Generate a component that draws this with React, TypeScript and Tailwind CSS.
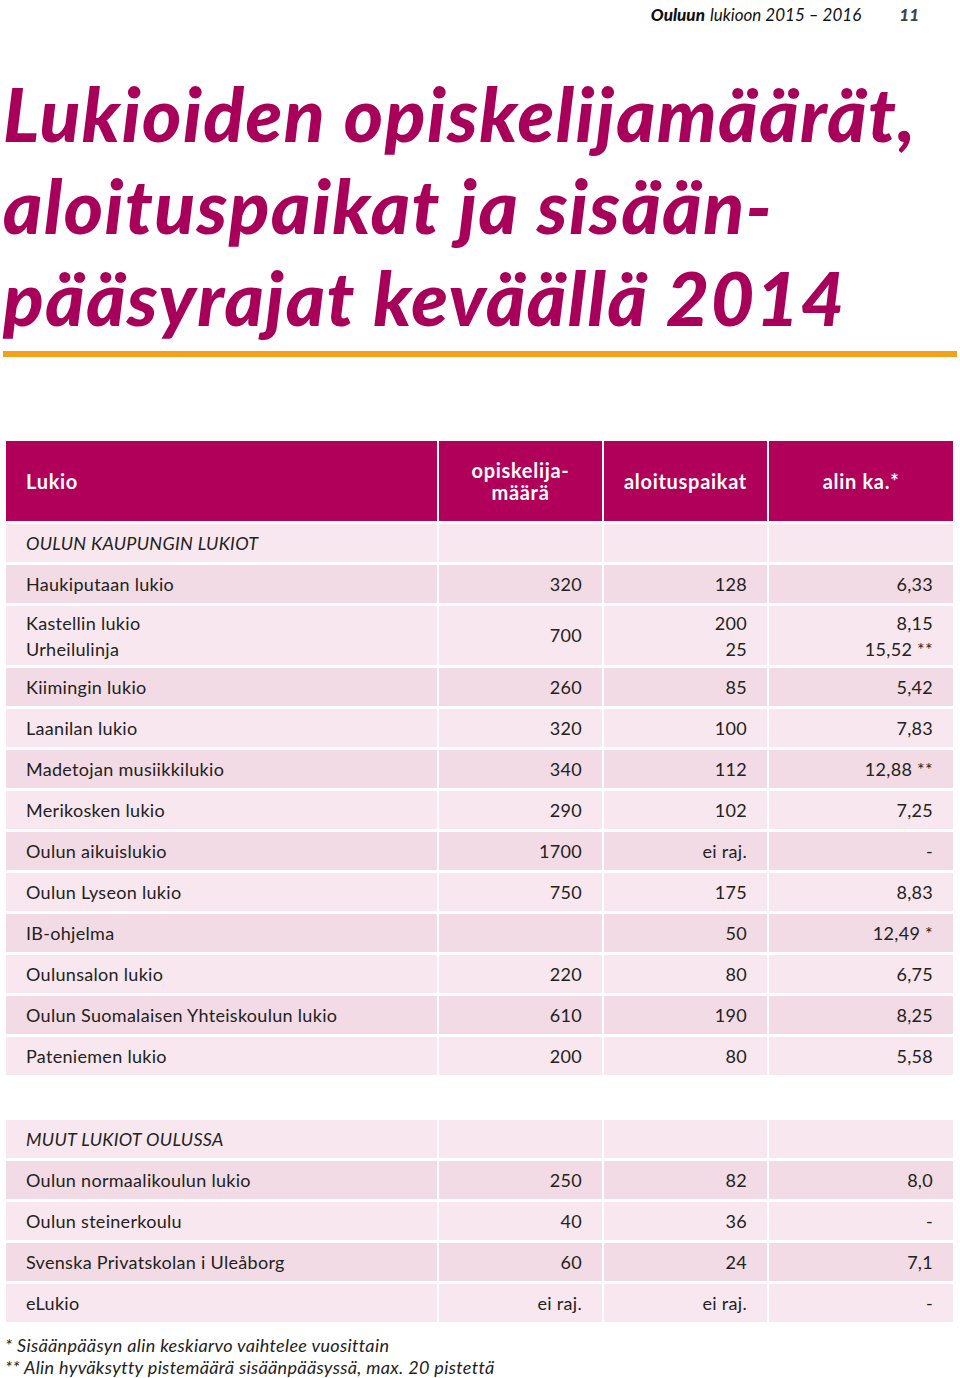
import React from "react";

type Row = { name: React.ReactNode; a: React.ReactNode; b: React.ReactNode; c: React.ReactNode; tall?: boolean; italic?: boolean };

const light = "bg-[#f8e7ee]";
const dark = "bg-[#f2dbe4]";

function Cell({ children, right, cls }: { children?: React.ReactNode; right?: boolean; cls: string }) {
  return (
    <div className={`${cls} flex items-center ${right ? "justify-end pr-[20px] text-right" : "pl-[20px]"}`}>
      <div>{children}</div>
    </div>
  );
}

function Body({ rows }: { rows: Row[] }) {
  return (
    <div className="grid grid-cols-[431px_163px_163px_184px] gap-x-[2px] gap-y-[3px]">
      {rows.map((r, i) => {
        const cls = (i % 2 === 0 ? light : dark) + (r.tall ? " h-[59px]" : " h-[38px]");
        return (
          <React.Fragment key={i}>
            <Cell cls={cls}>
              <span className={r.italic ? "italic" : ""}>{r.name}</span>
            </Cell>
            <Cell cls={cls} right>{r.a}</Cell>
            <Cell cls={cls} right>{r.b}</Cell>
            <Cell cls={cls} right>{r.c}</Cell>
          </React.Fragment>
        );
      })}
    </div>
  );
}

const two = (x: string, y: string) => (
  <div className="leading-[26px]">
    <div>{x}</div>
    <div>{y}</div>
  </div>
);

const rows1: Row[] = [
  { name: "OULUN KAUPUNGIN LUKIOT", a: "", b: "", c: "", italic: true },
  { name: "Haukiputaan lukio", a: "320", b: "128", c: "6,33" },
  { name: two("Kastellin lukio", "Urheilulinja"), a: "700", b: two("200", "25"), c: two("8,15", "15,52 **"), tall: true },
  { name: "Kiimingin lukio", a: "260", b: "85", c: "5,42" },
  { name: "Laanilan lukio", a: "320", b: "100", c: "7,83" },
  { name: "Madetojan musiikkilukio", a: "340", b: "112", c: "12,88 **" },
  { name: "Merikosken lukio", a: "290", b: "102", c: "7,25" },
  { name: "Oulun aikuislukio", a: "1700", b: "ei raj.", c: "-" },
  { name: "Oulun Lyseon lukio", a: "750", b: "175", c: "8,83" },
  { name: "IB-ohjelma", a: "", b: "50", c: "12,49 *" },
  { name: "Oulunsalon lukio", a: "220", b: "80", c: "6,75" },
  { name: "Oulun Suomalaisen Yhteiskoulun lukio", a: "610", b: "190", c: "8,25" },
  { name: "Pateniemen lukio", a: "200", b: "80", c: "5,58" },
];

const rows2: Row[] = [
  { name: "MUUT LUKIOT OULUSSA", a: "", b: "", c: "", italic: true },
  { name: "Oulun normaalikoulun lukio", a: "250", b: "82", c: "8,0" },
  { name: "Oulun steinerkoulu", a: "40", b: "36", c: "-" },
  { name: "Svenska Privatskolan i Uleåborg", a: "60", b: "24", c: "7,1" },
  { name: "eLukio", a: "ei raj.", b: "ei raj.", c: "-" },
];

export default function App() {
  return (
    <div className="w-[960px] h-[1378px] bg-white text-[#222] font-['Lato',sans-serif] overflow-hidden">
      <div className="flex justify-end items-center h-[28px] pt-[1px] pr-[41px] text-[17px] italic text-[#111]">
        <span className="font-black">Ouluun</span>
        <span className="ml-[5px]">lukioon 2015 – 2016</span>
        <span className="ml-[38px] font-black text-[#3a4450]">11</span>
      </div>
      <h1 className="mt-[39px] pl-[3px] text-[75px] leading-[92px] font-black italic text-[#a8005a] tracking-[1.5px]">
        <div>Lukioiden opiskelijamäärät,</div>
        <div>aloituspaikat ja sisään-</div>
        <div>pääsyrajat keväällä 2014</div>
      </h1>
      <div className="ml-[3px] mt-[8px] w-[954px] h-[6px] bg-[#f4a11a]" />
      <div className="pl-[6px] mt-[84px] text-[18px] tracking-[0.3px]">
        <div className="grid grid-cols-[431px_163px_163px_184px] gap-x-[2px] h-[80px] mb-[3px] text-white font-bold text-[20px] tracking-[0.7px]">
          <div className="bg-[#b0005a] flex items-center pl-[20px]">Lukio</div>
          <div className="bg-[#b0005a] flex items-center justify-center text-center leading-[22px]">
            <div>opiskelija-<br />määrä</div>
          </div>
          <div className="bg-[#b0005a] flex items-center justify-center">aloituspaikat</div>
          <div className="bg-[#b0005a] flex items-center justify-center">alin ka.*</div>
        </div>
        <Body rows={rows1} />
        <div className="h-[45px]" />
        <Body rows={rows2} />
        <div className="mt-[12px] -ml-[1px] italic text-[18px] leading-[22px] tracking-[0.35px]">
          <div>* Sisäänpääsyn alin keskiarvo vaihtelee vuosittain</div>
          <div>** Alin hyväksytty pistemäärä sisäänpääsyssä, max. 20 pistettä</div>
        </div>
      </div>
    </div>
  );
}
